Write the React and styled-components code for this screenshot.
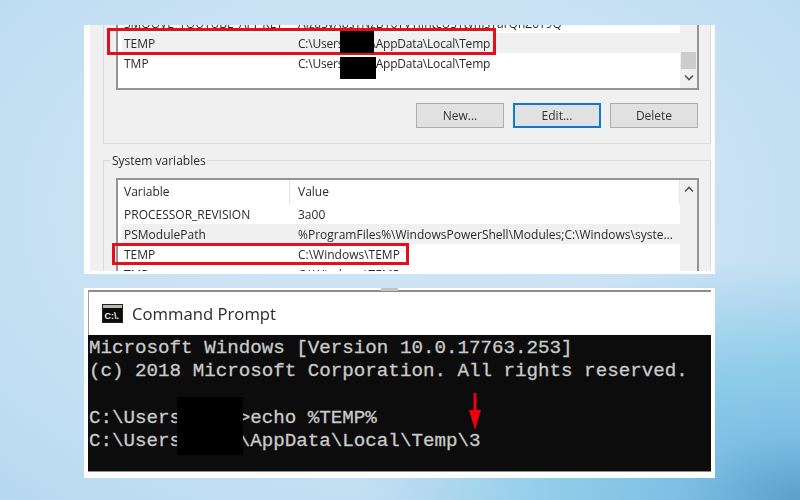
import React from "react";
import styled, { createGlobalStyle } from "styled-components";

const GlobalStyle = createGlobalStyle`
  html, body {
    margin: 0;
    padding: 0;
  }
  * {
    box-sizing: border-box;
  }
`;

const Page = styled.div`
  width: 800px;
  height: 500px;
  overflow: hidden;
  padding: 25px 85px 0 84px;
  display: flex;
  flex-direction: column;
  gap: 14px;
  background:
    radial-gradient(
      ellipse 440px 240px at 100% 100%,
      #5c9fca 0%,
      #7fbfe4 28%,
      #8ccbe9 52%,
      rgba(140, 203, 233, 0) 100%
    ),
    radial-gradient(ellipse 640px 430px at 50% 42%, #d2e6f6 0%, #c6e0f3 62%, #b2d7ee 100%);
`;

const DialogPanel = styled.section`
  position: relative;
  height: 249px;
  overflow: hidden;
  background: #f0f0f0;
  border: solid #fff;
  border-width: 0 4px 3px 6px;
  font-family: "Open Sans", "Noto Sans", sans-serif;
  font-size: 12px;
  color: #2a2a2a;
  filter: blur(0.3px);
`;

const GroupBox = styled.div`
  position: relative;
  margin-left: 13px;
  padding: ${(p) => (p.$open ? "0 11px 15px 12px" : "17px 11px 0 12px")};
  margin-top: ${(p) => (p.$open ? "0" : "16px")};
  border: 1px solid #dcdcdc;
  border-top-width: ${(p) => (p.$open ? "0" : "1px")};
`;

const GroupLabel = styled.span`
  position: absolute;
  left: 7px;
  top: -9px;
  padding: 0 1px;
  line-height: 17px;
  background: #f0f0f0;
`;

const ListView = styled.div`
  display: flex;
  height: ${(p) => p.$height}px;
  margin-top: ${(p) => p.$offset || 0}px;
  padding-left: 4px;
  background: #fff;
  border: 2px solid #949494;
  border-top-width: ${(p) => (p.$offset ? "0" : "2px")};
`;

const Rows = styled.div`
  flex: 1;
  min-width: 0;
`;

const Row = styled.div`
  display: grid;
  grid-template-columns: 176px 1fr;
  align-items: center;
  height: ${(p) => (p.$header ? "24px" : "20px")};
  background: ${(p) => (p.$shaded ? "#f0f0f0" : "transparent")};
  white-space: nowrap;
`;

const Cell = styled.span`
  padding-left: ${(p) => (p.$value ? "0" : "2px")};
  letter-spacing: ${(p) => (p.$tight ? "-0.2px" : "normal")};
`;

const HeaderCell = styled(Cell)`
  height: 24px;
  line-height: 24px;
  border-right: ${(p) => (p.$value ? "1px solid #e5e5e5" : "none")};
  position: relative;
`;

const ColumnRule = styled.i`
  position: absolute;
  right: 8px;
  top: 0;
  width: 1px;
  height: 24px;
  background: #e3e3e3;
`;

const ScrollBar = styled.div`
  width: 17px;
  flex: none;
  display: flex;
  flex-direction: column;
  background: #f0f0f0;
  padding-left: 1px;
`;

const ScrollThumb = styled.div`
  width: 15px;
  height: 17px;
  margin-top: 39px;
  background: #cdcdcd;
`;

const ScrollArrow = styled.svg`
  display: block;
  margin: ${(p) => p.$margin};
`;

const ButtonRow = styled.div`
  display: flex;
  justify-content: flex-end;
  gap: 9px;
  margin-top: 13px;
  padding-right: 1px;
`;

const DialogButton = styled.button`
  width: 88px;
  height: 25px;
  padding: 0;
  font: inherit;
  color: #333;
  background: #e1e1e1;
  border: ${(p) => (p.$focused ? "2px solid #0f78d0" : "1.5px solid #adadad")};
`;

const Highlight = styled.div`
  position: absolute;
  left: ${(p) => p.$left}px;
  top: ${(p) => p.$top}px;
  width: ${(p) => p.$width}px;
  height: ${(p) => p.$height}px;
  border: 3px solid #e3101c;
`;

const Redaction = styled.div`
  position: absolute;
  left: ${(p) => p.$left}px;
  top: ${(p) => p.$top}px;
  width: ${(p) => p.$width}px;
  height: ${(p) => p.$height}px;
  background: #000;
`;

const ConsolePanel = styled.section`
  position: relative;
  height: 190px;
  background: #fff;
  padding: 2px 4px 6px 4px;
  display: flex;
  flex-direction: column;
`;

const TitleTab = styled.i`
  position: absolute;
  left: 297px;
  top: 0;
  width: 17px;
  height: 3px;
  background: #c4c4c4;
`;

const TitleBar = styled.header`
  height: 45px;
  flex: none;
  display: flex;
  align-items: center;
  gap: 9px;
  padding: 0 0 1px 13px;
  background: #fff;
  border-top: 2px solid #8c8c8c;
  border-left: 1px solid #9a9a9a;
`;

const TitleText = styled.span`
  font-family: "Open Sans", "Noto Sans", sans-serif;
  font-size: 16.7px;
  color: #2b2b2b;
  filter: blur(0.3px);
`;

const Terminal = styled.pre`
  flex: 1;
  margin: 0;
  padding: 2px 0 0 1px;
  background: #0c0c0c;
  color: #cccccc;
  font-family: "Liberation Mono", "DejaVu Sans Mono", monospace;
  font-size: 19.2px;
  line-height: 23.3px;
  -webkit-text-stroke: 0.3px #c4c4c4;
  border-bottom: 1px solid #8c8c8c;
  overflow: hidden;
`;

const ArrowMark = styled.svg`
  position: absolute;
  left: 384px;
  top: 105px;
`;

function Chevron({ up, margin }) {
  return (
    <ScrollArrow $margin={margin} width="10" height="7" viewBox="0 0 10 7">
      <path
        d={up ? "M1 5.5 L5 1.5 L9 5.5" : "M1 1.5 L5 5.5 L9 1.5"}
        fill="none"
        stroke="#555"
        strokeWidth="1.6"
      />
    </ScrollArrow>
  );
}

function CmdIcon() {
  return (
    <svg width="21" height="19" viewBox="0 0 21 19">
      <rect x="0" y="0" width="21" height="19" fill="#222" />
      <rect x="1" y="1" width="19" height="3" fill="#b8b8b8" />
      <rect x="1" y="4" width="19" height="14" fill="#0c0c0c" />
      <text x="2.5" y="14.5" fill="#f0f0f0" fontFamily="Liberation Sans, sans-serif" fontSize="9" fontWeight="700">
        C:\.
      </text>
    </svg>
  );
}

export default function App() {
  return (
    <>
      <GlobalStyle />
      <Page>
        <DialogPanel>
          <GroupBox $open>
            <ListView $height={77} $offset={-12}>
              <Rows>
                <Row>
                  <Cell>SMOOVE_YOUTUBE_API_KEY</Cell>
                  <Cell $value>AIzaSyAbsYNzB16TVYiIntcUSYtvhIsYarQhZ0T9Q</Cell>
                </Row>
                <Row $shaded>
                  <Cell>TEMP</Cell>
                  <Cell $value $tight>C:\Users\user\AppData\Local\Temp</Cell>
                </Row>
                <Row>
                  <Cell>TMP</Cell>
                  <Cell $value $tight>C:\Users\user\AppData\Local\Temp</Cell>
                </Row>
              </Rows>
              <ScrollBar>
                <ScrollThumb />
                <Chevron margin="5px 0 0 3px" />
              </ScrollBar>
            </ListView>
            <ButtonRow>
              <DialogButton>New...</DialogButton>
              <DialogButton $focused>Edit...</DialogButton>
              <DialogButton>Delete</DialogButton>
            </ButtonRow>
          </GroupBox>
          <GroupBox>
            <GroupLabel>System variables</GroupLabel>
            <ListView $height={120}>
              <Rows>
                <Row $header>
                  <HeaderCell>
                    Variable
                    <ColumnRule />
                  </HeaderCell>
                  <HeaderCell $value>Value</HeaderCell>
                </Row>
                <Row>
                  <Cell>PROCESSOR_REVISION</Cell>
                  <Cell $value>3a00</Cell>
                </Row>
                <Row $shaded>
                  <Cell>PSModulePath</Cell>
                  <Cell $value>%ProgramFiles%\WindowsPowerShell\Modules;C:\Windows\syste...</Cell>
                </Row>
                <Row>
                  <Cell>TEMP</Cell>
                  <Cell $value>C:\Windows\TEMP</Cell>
                </Row>
                <Row>
                  <Cell>TMP</Cell>
                  <Cell $value>C:\Windows\TEMP</Cell>
                </Row>
              </Rows>
              <ScrollBar>
                <Chevron up margin="6px 0 0 3px" />
              </ScrollBar>
            </ListView>
          </GroupBox>
          <Highlight $left={17} $top={3} $width={389} $height={27} />
          <Highlight $left={22} $top={218} $width={297} $height={22} />
          <Redaction $left={250} $top={6} $width={34} $height={22} />
          <Redaction $left={250} $top={32} $width={36} $height={22} />
        </DialogPanel>
        <ConsolePanel>
          <TitleTab />
          <TitleBar>
            <CmdIcon />
            <TitleText>Command Prompt</TitleText>
          </TitleBar>
          <Terminal>{`Microsoft Windows [Version 10.0.17763.253]
(c) 2018 Microsoft Corporation. All rights reserved.

C:\\Users\\user>echo %TEMP%
C:\\Users\\user\\AppData\\Local\\Temp\\3`}</Terminal>
          <Redaction $left={93} $top={109} $width={66} $height={58} />
          <ArrowMark width="14" height="38" viewBox="0 0 14 38">
            <path d="M5.5 0 H8.5 V17 H13 L7 37 L1 17 H5.5 Z" fill="#f0000f" />
          </ArrowMark>
        </ConsolePanel>
      </Page>
    </>
  );
}
